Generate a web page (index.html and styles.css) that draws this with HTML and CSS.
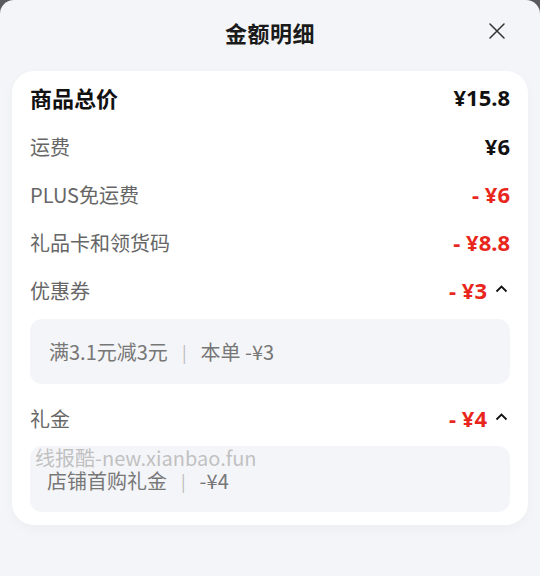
FILE: index.html
```html
<!DOCTYPE html>
<html lang="zh">
<head>
<meta charset="utf-8">
<link rel="stylesheet" href="styles.css">
</head>
<body>
<div class="sheet">
  <div class="header">
    <div class="title">金额明细</div>
    <svg class="close" width="16" height="16" viewBox="0 0 16 16"><path d="M1 1L15 15M15 1L1 15" stroke="#333" stroke-width="1.5" fill="none" stroke-linecap="round"/></svg>
  </div>
  <div class="card">
    <div class="row total"><span class="label">商品总价</span><span class="amt">¥15.8</span></div>
    <div class="row"><span class="label">运费</span><span class="amt">¥6</span></div>
    <div class="row"><span class="label">PLUS免运费</span><span class="amt red">- ¥6</span></div>
    <div class="row"><span class="label">礼品卡和领货码</span><span class="amt red">- ¥8.8</span></div>
    <div class="row"><span class="label">优惠券</span><span class="right"><span class="amt red">- ¥3</span><svg class="chev" width="13" height="8" viewBox="0 0 13 8"><path d="M1.5 6.5L6.5 1.5L11.5 6.5" stroke="#111" stroke-width="1.8" fill="none"/></svg></span></div>
    <div class="box">满3.1元减3元<span class="sep">|</span>本单 -¥3</div>
    <div class="row row-gap"><span class="label">礼金</span><span class="right"><span class="amt red">- ¥4</span><svg class="chev" width="13" height="8" viewBox="0 0 13 8"><path d="M1.5 6.5L6.5 1.5L11.5 6.5" stroke="#111" stroke-width="1.8" fill="none"/></svg></span></div>
    <div class="box box2">店铺首购礼金<span class="sep">|</span>-¥4</div>
    <div class="watermark">线报酷-new.xianbao.fun</div>
  </div>
</div>
</body>
</html>
```

FILE: styles.css
```css
* { box-sizing: border-box; }
html, body { margin: 0; padding: 0; }
body {
  width: 540px;
  height: 576px;
  background: #5a5a5c;
  font-family: "Noto Sans CJK SC", "Noto Sans", sans-serif;
  overflow: hidden;
}
.sheet {
  width: 540px;
  height: 576px;
  background: #f4f5f8;
  border-radius: 14px 14px 0 0;
  padding: 0 12px;
}
.header {
  height: 71px;
  display: flex;
  align-items: center;
  justify-content: center;
  position: relative;
  padding-bottom: 8px;
}
.title {
  font-size: 22px;
  font-weight: 700;
  color: #1a1a1a;
  letter-spacing: 0.5px;
}
.close {
  position: absolute;
  right: 23px;
  top: 23px;
}
.card {
  background: #fff;
  border-radius: 22px;
  padding: 0 18px 13px;
  position: relative;
  box-shadow: 0 4px 12px rgba(0,0,0,0.03);
}
.row {
  height: 48px;
  display: flex;
  align-items: center;
  justify-content: space-between;
}
.total { height: 51px; }
.label {
  font-size: 20px;
  color: #666;
}
.total .label {
  font-size: 22px;
  font-weight: 700;
  color: #111;
}
.amt {
  font-family: "Noto Sans", "Noto Sans CJK SC", sans-serif;
  font-size: 22px;
  font-weight: 700;
  color: #111;
}
.total .amt { font-size: 22px; }
.red { color: #e8261c; }
.right {
  display: flex;
  align-items: center;
  gap: 8px;
}
.chev { margin-right: 2px; margin-top: -3px; }
.box {
  margin-top: 5px;
  height: 65px;
  background: #f4f5f8;
  border-radius: 12px;
  display: flex;
  align-items: center;
  padding-left: 19px;
  font-size: 20px;
  color: #777;
}
.sep {
  color: #bbb;
  margin: 0 14px;
  font-size: 17px;
}
.row-gap { margin-top: 10px; }
.box2 { margin-top: 4px; height: 66px; padding-left: 17px; padding-top: 2px; }
.watermark {
  position: absolute;
  left: 23px;
  top: 372px;
  font-size: 20px;
  color: rgba(175,175,175,0.75);
  font-family: "Noto Sans CJK SC", "Noto Sans", sans-serif;
}
```
